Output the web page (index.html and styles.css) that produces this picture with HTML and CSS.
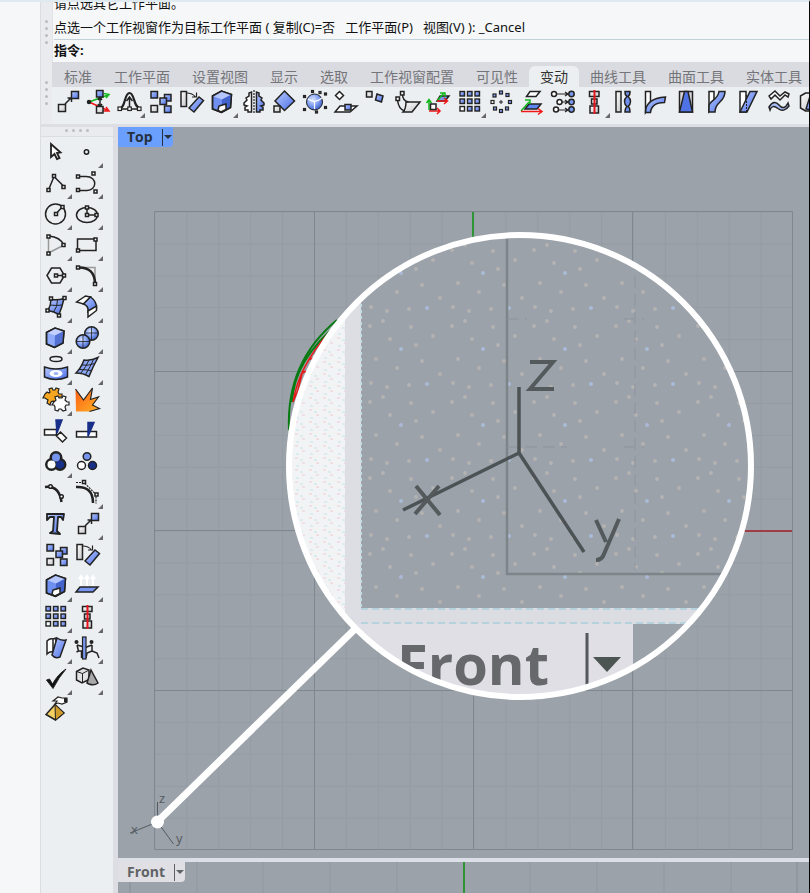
FILE: index.html
```html
<!DOCTYPE html>
<html lang="zh-CN">
<head>
<meta charset="utf-8">
<meta name="viewport" content="width=device-width, initial-scale=1">
<title>工作平面</title>
<link rel="stylesheet" href="styles.css">
</head>
<body>
<svg class="defs" width="0" height="0" aria-hidden="true">
  <defs>
    <linearGradient id="b" x1="0" y1="0" x2="1" y2="1"><stop offset="0" stop-color="#b9caff"/><stop offset="1" stop-color="#4a6fe6"/></linearGradient>
    <linearGradient id="g" x1="0" y1="0" x2="1" y2="1"><stop offset="0" stop-color="#fff"/><stop offset="1" stop-color="#c4c4c8"/></linearGradient>
    <linearGradient id="o" x1="0" y1="0" x2="1" y2="1"><stop offset="0" stop-color="#ff5a10"/><stop offset="1" stop-color="#ffb52a"/></linearGradient>
    <radialGradient id="s" cx=".4" cy=".35" r=".7"><stop offset="0" stop-color="#dce5ff"/><stop offset=".5" stop-color="#86a3f5"/><stop offset="1" stop-color="#3457bd"/></radialGradient>
    <symbol id="move" viewBox="0 0 31 31">
      <path d="M13 17l6-6M15.500 11H19.500V15"/><rect x="6.500" y="17.500" width="7" height="7" fill="url(#g)"/><rect x="19.500" y="4.500" width="7" height="7" fill="url(#b)"/>
    </symbol>
    <symbol id="copy" viewBox="0 0 31 31">
      <rect x="6" y="4.500" width="6.500" height="6.500" fill="url(#b)"/><rect x="6" y="18.500" width="6.500" height="6.500" fill="url(#g)"/><rect x="19.500" y="7.500" width="6.500" height="6.500" fill="url(#b)"/><rect x="15" y="11" width="6.500" height="6.500" fill="url(#b)"/><rect x="19.500" y="19" width="6.500" height="6.500" fill="url(#b)"/>
    </symbol>
    <symbol id="rotate" viewBox="0 0 31 31">
      <rect x="5" y="4.500" width="5.500" height="15" fill="url(#g)"/><path d="M10.500 6q6 0 9 4M16 10h4.500V5.500" stroke-width="1.200"/><path d="M13 21L23 10l4.500 3.500L18 25z" fill="url(#b)"/>
    </symbol>
    <symbol id="cage" viewBox="0 0 31 31">
      <path d="M5.500 9L14.500 4l10 3.500-1 13-9 5-9-3.500z" fill="#6f90f0"/><path d="M5.500 9L14.500 4l10 3.500L15 12.500z" fill="#b4c6fc" stroke="none"/><path d="M15 12.500l9.500-5-1 13-9 5z" fill="#4464cc" stroke="none"/><path d="M5.500 9L14.500 4l10 3.500-1 13-9 5-9-3.500z"/><path d="M12 19l7-2v5.500l-5 2.500-3-2z" fill="#fff"/>
    </symbol>
    <symbol id="array" viewBox="0 0 31 31">
      <g fill="url(#b)" stroke-width="1.400"><rect x="5" y="4.500" width="4.500" height="4.500"/><rect x="12.500" y="4.500" width="4.500" height="4.500"/><rect x="20" y="4.500" width="4.500" height="4.500"/><rect x="5" y="12" width="4.500" height="4.500"/><rect x="12.500" y="12" width="4.500" height="4.500"/><rect x="20" y="12" width="4.500" height="4.500"/><rect x="5" y="19.500" width="4.500" height="4.500" fill="#fff"/><rect x="12.500" y="19.500" width="4.500" height="4.500"/><rect x="20" y="19.500" width="4.500" height="4.500"/></g>
    </symbol>
    <symbol id="align" viewBox="0 0 31 31">
      <g fill="url(#g)"><rect x="10.500" y="4.500" width="9.500" height="5"/><rect x="12.500" y="12" width="5.500" height="5"/><rect x="11" y="19" width="8.500" height="7"/></g><path d="M15.500 3v24" stroke="#e8141c" stroke-width="2"/>
    </symbol>
  </defs>
</svg>

<div class="app">
  <section class="command">
    <div class="grip"><i></i><i></i><i></i><i></i></div>
    <div class="console">
      <div class="history">
        <p>请点选其它工作平面。</p>
        <p>点选一个工作视窗作为目标工作平面 ( 复制(C)=否&nbsp;&nbsp; 工作平面(P)&nbsp;&nbsp; 视图(V) ): _Cancel</p>
      </div>
      <div class="prompt"><label for="cmd">指令:</label><input id="cmd" type="text"></div>
    </div>
  </section>

  <section class="ribbon">
    <div class="grip"><i></i><i></i><i></i><i></i></div>
    <div class="ribbon-body">
      <nav class="tabs">
        <button>标准</button><button>工作平面</button><button>设置视图</button><button>显示</button><button>选取</button><button>工作视窗配置</button><button>可见性</button><button class="active">变动</button><button>曲线工具</button><button>曲面工具</button><button>实体工具</button>
      </nav>
      <div class="tools">
        <button class="tool" aria-label="移动"><svg><use href="#move"/></svg></button>
        <button class="tool" aria-label="对齐轴"><svg viewBox="0 0 31 31"><path d="M6 15L25 8M21 6.500l5 1-3 3.500" stroke="#12b81c"/><path d="M6 15l19 8.500M20 24l6 0-3-4" stroke="#f01818"/><circle cx="6" cy="15" r="1.500" fill="#222"/><path d="M17 10v10M15 13l2-3 2 3M15 17l2 3 2-3"/><rect x="13.500" y="3.500" width="6.500" height="6.500" fill="url(#b)"/><rect x="13.500" y="19.500" width="6.500" height="6.500" fill="url(#g)"/></svg></button>
        <button class="tool more" aria-label="软移动"><svg viewBox="0 0 31 31"><path d="M5 22C12 21 10 6 15.500 6S19 21 27 22" stroke-width="2.200"/><path d="M15.500 21V10M12.500 14l3-4 3 4M7 22h17"/><rect x="4" y="20" width="3.500" height="3.500" fill="#fff" stroke-width="1.200"/><rect x="13.800" y="20" width="3.500" height="3.500" fill="#fff" stroke-width="1.200"/><rect x="23.500" y="20" width="3.500" height="3.500" fill="#fff" stroke-width="1.200"/></svg></button>
        <button class="tool" aria-label="复制"><svg><use href="#copy"/></svg></button>
        <button class="tool" aria-label="旋转"><svg><use href="#rotate"/></svg></button>
        <button class="tool more" aria-label="变形"><svg><use href="#cage"/></svg></button>
        <button class="tool" aria-label="镜像"><svg viewBox="0 0 31 31"><path d="M13.500 5v20H10v-2H7v-3l2-1-3-1 0-2 3-3-1-2 3-2V6z" fill="#fff"/><path d="M18.500 5v20H22v-2h3v-3l-2-1 3-1 0-2-3-3 1-2-3-2V6z" fill="url(#b)"/><path d="M16 3v24" stroke-dasharray="2 1" stroke-width="1.200"/></svg></button>
        <button class="tool" aria-label="缩放"><svg viewBox="0 0 31 31"><path d="M15.500 4l10 10-10 9.500-9.500-9.500z" fill="url(#b)"/><rect x="5" y="19" width="6" height="6" fill="url(#g)"/></svg></button>
        <button class="tool" aria-label="球形对变"><svg viewBox="0 0 31 31"><circle cx="14.500" cy="15" r="8" fill="url(#s)" stroke-width="1"/><path d="M8 12q7 5 14-1M14.500 14v8" stroke="#fff" stroke-width="1.200"/><g fill="#888" stroke-width="1.200"><rect x="11.500" y="3.500" width="2" height="2"/><rect x="19" y="4.500" width="2" height="2"/><rect x="3.500" y="8.500" width="2" height="2"/><rect x="24.500" y="6" width="2" height="2"/><rect x="3.500" y="21.500" width="2" height="2"/><rect x="15.500" y="24" width="2" height="2"/><rect x="24.500" y="19.500" width="2" height="2"/></g></svg></button>
        <button class="tool" aria-label="投影至平面"><svg viewBox="0 0 31 31"><path d="M8.500 4.500l4 4-4 4-4-4z" fill="#fff"/><path d="M9 19h17l-7 6H4z" fill="#fff"/><rect x="14" y="17.500" width="6" height="5.500" fill="url(#b)"/></svg></button>
        <button class="tool" aria-label="两点定位"><svg viewBox="0 0 31 31"><rect x="4.500" y="4.500" width="5.500" height="5.500" fill="url(#g)"/><path d="M15 7l6 2-1.500 6-6-2z" fill="url(#b)"/></svg></button>
        <button class="tool" aria-label="定位至曲面"><svg viewBox="0 0 31 31"><path d="M13 15h14l-8 10h-9q3-3 3-10z" fill="url(#g)"/><path d="M4.500 13q1 9 7 11M9.500 7q0 7 6 8"/><rect x="3" y="10" width="3.500" height="3.500" fill="#fff"/><rect x="7.500" y="4.500" width="3.500" height="3.500" fill="#fff"/></svg></button>
        <button class="tool" aria-label="重新对应"><svg viewBox="0 0 31 31"><path d="M13 9h9l-4 5h-8z" fill="#7897ef" transform="translate(3 0)"/><path d="M5 23V13M2.500 16L5 12.500 7.500 16M13 14l7-8M16 6h5v4" stroke="#12b81c"/><path d="M5 24h10M13 21l3 3-3 3M13 14h10M20 11l3.500 3-3.500 3" stroke="#f01818"/><rect x="6.500" y="17" width="5.500" height="5.500" fill="#fff"/></svg></button>
        <button class="tool more" aria-label="矩形阵列"><svg><use href="#array"/></svg></button>
        <button class="tool" aria-label="环形阵列"><svg viewBox="0 0 31 31"><g fill="url(#b)" stroke-width="1.200"><rect x="13.500" y="4" width="3" height="3"/><rect x="20" y="6.500" width="3" height="3"/><rect x="22.500" y="13.500" width="3" height="3"/><rect x="19.500" y="20" width="3" height="3"/><rect x="13.500" y="22.500" width="3" height="3"/><rect x="7.500" y="20" width="3" height="3"/><rect x="5" y="13.500" width="3" height="3" fill="#fff"/><rect x="7" y="7" width="3" height="3"/></g><path d="M13 15h4M15 13v4" stroke-width="1"/></svg></button>
        <button class="tool" aria-label="工作平面定位"><svg viewBox="0 0 31 31"><path d="M13 4.500h10l-4 5H9.500z" fill="#fff"/><path d="M12 17h12l-4 5H8z" fill="#5f83ec"/><path d="M4 24l8-9M8 13h5v4" stroke="#12b81c"/><path d="M4 24.500h20M21 21.500l4 3-4 3" stroke="#f01818"/></svg></button>
        <button class="tool" aria-label="设置点"><svg viewBox="0 0 31 31"><path d="M7 7h17M12 15h12M9 23h15M17 5l3 2-3 2M17 13l3 2-3 2M17 21l3 2-3 2" stroke-width="1.200"/><g fill="#fff"><circle cx="6" cy="7" r="2.500"/><circle cx="11.500" cy="15" r="2.500"/><circle cx="8" cy="22.500" r="2.500"/></g><g fill="#7897ef"><circle cx="23.500" cy="7" r="2.700"/><circle cx="23.500" cy="15" r="2.700"/><circle cx="23.500" cy="22.500" r="2.700"/></g></svg></button>
        <button class="tool more" aria-label="对齐"><svg><use href="#align"/></svg></button>
        <button class="tool" aria-label="扭转"><svg viewBox="0 0 31 31"><rect x="6" y="4.500" width="5" height="20.500" fill="url(#g)"/><path d="M15 4.500h5q0 4-2 5 2.500 2 2.500 5t-2.500 5q2 1 2 5.500h-5q0-4 2-5.500-2.500-2-2.500-5t2.500-5q-2-1-2-5z" fill="#6f8ff0"/></svg></button>
        <button class="tool" aria-label="弯曲"><svg viewBox="0 0 31 31"><path d="M4.500 4.500h5V18L4.500 25.500z" fill="#fff"/><path d="M4.500 25.500q0-14 20-15.500l-1 5.500q-13 0-14 10z" fill="url(#b)"/></svg></button>
        <button class="tool" aria-label="锥状化"><svg viewBox="0 0 31 31"><path d="M7.500 4.500h13v20.500h-13z" fill="#d6d6da"/><path d="M12.500 4.500h3.500l4.500 20.500H7.500z" fill="#4f73e6"/></svg></button>
        <button class="tool" aria-label="流动"><svg viewBox="0 0 31 31"><path d="M6 4.500h5v12l-5 8z" fill="#fff"/><path d="M6 25v-6c0-5 9-6 10-14.500h6C22 16 12 14 12 25z" fill="url(#b)"/></svg></button>
        <button class="tool" aria-label="倾斜"><svg viewBox="0 0 31 31"><path d="M6 4.500h6v20.500H6z" fill="#fff"/><path d="M6 25L16 4.500h7L13 25z" fill="url(#b)"/><path d="M12.500 8v17" stroke-dasharray="2 1" stroke-width="1"/></svg></button>
        <button class="tool" aria-label="平滑"><svg viewBox="0 0 31 31"><path d="M4 9l6-5 5 5 5-4 4 2-1 3-3-2-5 5-5-5-4 4z" fill="#fff"/><path d="M4 20q5-8 10-2t9-2l1 3q-5 7-11 2.500t-8 1.500z" fill="#a9bdf8"/></svg></button>
        <button class="tool" aria-label="沿曲面流动"><svg viewBox="0 0 31 31"><path d="M4.500 9l5-3h8v18h-8l-5-3z" fill="url(#g)"/><path d="M10 22l5-16h6v18z" fill="url(#b)"/></svg></button>
      </div>
    </div>
  </section>

  <main class="workspace">
    <aside class="palette">
      <div class="grip wide"><i></i><i></i><i></i><i></i></div>
      <div class="palette-grid">
        <button class="tool" aria-label="选取"><svg viewBox="0 0 31 31"><path d="M10 7v13l3.500-3 2.500 5 2.500-1-2.500-5 3.500-.500z" fill="#fff" stroke-width="1.800"/></svg></button>
        <button class="tool more" aria-label="点"><svg viewBox="0 0 31 31"><circle cx="14.500" cy="15" r="2.200"/></svg></button>
        <button class="tool more" aria-label="多重直线"><svg viewBox="0 0 31 31"><path d="M7.500 22L13 8.500l10 10"/><g fill="#fff"><rect x="6" y="20.500" width="3" height="3"/><rect x="11.500" y="6.500" width="3" height="3"/><rect x="21" y="17.500" width="3" height="3"/></g></svg></button>
        <button class="tool more" aria-label="曲线"><svg viewBox="0 0 31 31"><path d="M6 8.500h8c12 0 11 14 1 14H6"/><g fill="#fff"><rect x="4.500" y="7" width="3" height="3"/><rect x="4.500" y="20.500" width="3" height="3"/><rect x="20" y="4" width="3" height="3"/><rect x="22" y="22" width="3" height="3"/></g></svg></button>
        <button class="tool more" aria-label="圆"><svg viewBox="0 0 31 31"><circle cx="14.500" cy="15" r="10"/><path d="M15 15l6-7"/><g fill="#fff"><rect x="13.500" y="13.500" width="3" height="3"/><rect x="20" y="6.500" width="3" height="3"/></g></svg></button>
        <button class="tool more" aria-label="椭圆"><svg viewBox="0 0 31 31"><ellipse cx="15" cy="16" rx="10.500" ry="7.500"/><path d="M15 9v7h9"/><g fill="#fff"><rect x="13.500" y="7" width="3" height="3"/><rect x="13.500" y="14.500" width="3" height="3"/><rect x="23" y="14.500" width="3" height="3"/></g></svg></button>
        <button class="tool more" aria-label="圆弧"><svg viewBox="0 0 31 31"><path d="M7.500 23V7" stroke="#999"/><path d="M7.500 23L23 15" stroke="#999"/><path d="M8 6q11 1 15 9"/><g fill="#fff"><rect x="6" y="5" width="3" height="3"/><rect x="6" y="22" width="3" height="3"/><rect x="21" y="13.500" width="3" height="3"/></g></svg></button>
        <button class="tool more" aria-label="矩形"><svg viewBox="0 0 31 31"><rect x="5.500" y="9" width="18.500" height="11.500"/><g fill="#fff"><rect x="4.500" y="19" width="3" height="3"/><rect x="22" y="8" width="3" height="3"/></g></svg></button>
        <button class="tool more" aria-label="多边形"><svg viewBox="0 0 31 31"><path d="M6 14.500L10.500 7h8.500l4.500 7.500L19 22h-8.500zM15 14.500h8"/><g fill="#fff"><rect x="13.500" y="13" width="3" height="3"/><rect x="21.500" y="13" width="3" height="3"/></g></svg></button>
        <button class="tool more" aria-label="曲线圆角"><svg viewBox="0 0 31 31"><path d="M6 6.500h17v17" stroke="#999"/><path d="M6 6.500Q23 6 23 23" stroke-width="2.500"/><g fill="#fff"><rect x="4.500" y="5" width="3" height="3"/><rect x="21.500" y="21.500" width="3" height="3"/></g></svg></button>
        <button class="tool more" aria-label="曲面"><svg viewBox="0 0 31 31"><path d="M10 7.500q7 1 13-1-2 9-5 16-5-3-11-4 3-6 3-11z" fill="url(#b)"/><path d="M16.500 8q0 7-4 12M9 13q7 1 12 0" stroke-width="1"/><g fill="#fff"><rect x="8.500" y="5" width="3" height="3"/><rect x="22" y="4.500" width="3" height="3"/><rect x="5" y="17" width="3" height="3"/><rect x="16.500" y="22" width="3" height="3"/></g></svg></button>
        <button class="tool more" aria-label="曲面圆角"><svg viewBox="0 0 31 31"><path d="M4.500 10l9-6 5 1-7 7z" fill="#fff"/><path d="M11.500 12l7-7q6 4 6 11L16 20q1-6-4.500-8z" fill="url(#b)"/><path d="M16 19l8.500-5v4.500L16 25z" fill="#fff"/></svg></button>
        <button class="tool more" aria-label="立方体"><svg viewBox="0 0 31 31"><path d="M5.500 9.500L14 5l9 3-1 12-8.500 4.500-8-3.500z" fill="#8fabfa"/><path d="M5.500 9.500L14 5l9 3-9 4.500z" fill="#c3d0ff" stroke="none"/><path d="M14 12.500l9-4.500-1 12-8.500 4.500z" fill="#5371d2" stroke="none"/><path d="M5.500 9.500L14 5l9 3-1 12-8.500 4.500-8-3.500z"/></svg></button>
        <button class="tool more" aria-label="布尔运算"><svg viewBox="0 0 31 31"><circle cx="19.500" cy="10.500" r="6.800" fill="url(#s)"/><circle cx="11" cy="18.500" r="6.800" fill="url(#s)"/><path d="M4.500 18.500h13M11 12v13M14 10h12M19.500 4v13" stroke-width=".800"/></svg></button>
        <button class="tool more" aria-label="投影曲线"><svg viewBox="0 0 31 31"><ellipse cx="15" cy="5" rx="6" ry="2.500"/><path d="M3.500 13q11 4 23 0v10q-12 5-23 0z" fill="url(#b)"/><ellipse cx="15" cy="19.500" rx="6.500" ry="3.500" fill="#fff" stroke="none"/><ellipse cx="15" cy="19.500" rx="2.500" ry="1.500" fill="#9cb2f4" stroke="none"/></svg></button>
        <button class="tool more" aria-label="网格"><svg viewBox="0 0 31 31"><path d="M12 6q7 1 14-2.500-5 9-9 19Q11 19 4 19q5-5 8-13z" fill="#8aa5f4"/><path d="M17 6q-3 7-8 13M21.500 5.500q-3 7-8 15M9.500 11q7 1 13-1.500M7 15.500q6 0 12 1" stroke-width="1"/></svg></button>
        <button class="tool more" aria-label="组合"><svg viewBox="0 0 31 31"><path d="M4 9l2-2 2 1 1-1-1-3 3-1 1 2h2l1-2 3 1-1 3 1 2 3 0v3l-3 0-2 2 1 3-3 1-2-2-2 1-1 3-3-2 1-3-3-2-2 0z" fill="#f7a621" stroke-width="1.200"/><path d="M13 17l2-2-1-3 3-1 1 2 3 0 1-2 3 1-1 3 2 2 2 0v3l-3 0-1 2 1 3-3 1-2-2-2 0-1 2-3-1 0-3-1-2-2 0z" fill="#fff" stroke-width="1.200"/></svg></button>
        <button class="tool" aria-label="炸开"><svg viewBox="0 0 31 31"><path d="M3.500 4l8 11 9-12-2 11.500 8-2.500-6 8 7 3.500-10 3H4z" fill="url(#o)" stroke="none"/><path d="M3.500 4l8 11 9-12-2 11.500 8-2.500-6 8 7 3.500-10 3" stroke-width="1.200"/></svg></button>
        <button class="tool" aria-label="修剪"><svg viewBox="0 0 31 31"><path d="M3.500 13.500h12v5.500h-12zM15.500 20l4-4 6 6-4 4z" fill="#fff"/><path d="M15 4h6l-5 13z" fill="#18308a" stroke="#18308a"/></svg></button>
        <button class="tool" aria-label="分割"><svg viewBox="0 0 31 31"><path d="M4.500 15.500h20v5.500h-20z" fill="#fff"/><path d="M16 6.500h6l-6 14z" fill="#18308a" stroke="#18308a"/></svg></button>
        <button class="tool more" aria-label="群组"><svg viewBox="0 0 31 31"><g stroke-width="5"><circle cx="15" cy="10.500" r="4"/><circle cx="10.500" cy="17.500" r="4"/><circle cx="19" cy="17.500" r="4"/></g><g stroke="none"><circle cx="10.500" cy="17.500" r="4" fill="#fff"/><circle cx="19" cy="17.500" r="4" fill="#18308a"/><circle cx="15" cy="10.500" r="4" fill="#7594f0"/></g></svg></button>
        <button class="tool" aria-label="解散群组"><svg viewBox="0 0 31 31"><circle cx="15" cy="9.500" r="3.800" fill="#7594f0"/><circle cx="9.500" cy="18.500" r="4" fill="#fff"/><circle cx="20.500" cy="18.500" r="4" fill="#18308a"/></svg></button>
        <button class="tool" aria-label="编辑点"><svg viewBox="0 0 31 31"><path d="M4 9q14-2 16.500 15" stroke-width="2.500"/><g fill="#fff"><circle cx="9.500" cy="8.500" r="1.800"/><circle cx="20.500" cy="18.500" r="1.800"/></g></svg></button>
        <button class="tool more" aria-label="控制点"><svg viewBox="0 0 31 31"><path d="M4 9q17-1 17 16" stroke-width="2.500"/><path d="M4 4.500h8l12 12v9" stroke-dasharray="2 1" stroke-width="1.200"/><rect x="10.500" y="2.500" width="3" height="3" fill="#fff"/><rect x="23" y="15" width="3" height="3" fill="#fff"/></svg></button>
        <button class="tool" aria-label="文字物件"><svg viewBox="0 0 31 31"><path d="M6 5h17l-1 6-2-3h-3l-1 14 3 3-10-1 3-2 1-14H9l-3 3z" fill="url(#b)" stroke-width="1.800" stroke-linejoin="round"/></svg></button>
        <button class="tool more" aria-label="移动"><svg><use href="#move"/></svg></button>
        <button class="tool" aria-label="复制"><svg><use href="#copy"/></svg></button>
        <button class="tool" aria-label="旋转"><svg><use href="#rotate"/></svg></button>
        <button class="tool more" aria-label="变形"><svg><use href="#cage"/></svg></button>
        <button class="tool more" aria-label="分析方向"><svg viewBox="0 0 31 31"><path d="M8 16h18l-5 5H4z" fill="#7896f0"/><path d="M9 15V6M15 15V6M21 15V6M7 8l2-3 2 3M13 8l2-3 2 3M19 8l2-3 2 3" stroke="#fff" stroke-width="2"/></svg></button>
        <button class="tool more" aria-label="矩形阵列"><svg><use href="#array"/></svg></button>
        <button class="tool more" aria-label="对齐"><svg><use href="#align"/></svg></button>
        <button class="tool more" aria-label="沿曲面流动"><svg viewBox="0 0 31 31"><path d="M6 8q3-3 6-2v13q-3-1-6 2zM12 6l3-1v5l-3 9z" fill="#fff"/><path d="M16 5q4 3 9 2l-6 17q-5 2-8-2z" fill="url(#b)"/></svg></button>
        <button class="tool more" aria-label="拉伸"><svg viewBox="0 0 31 31"><g fill="#222" stroke="none"><circle cx="4.500" cy="9" r="2"/><circle cx="19.500" cy="9" r="2"/></g><path d="M5 12l1.500 6h3v7M5 12l7 2M6.500 18l-2 1M20 12l-8 3M20 12v6l5 2 2 5M20 18l-5 2-1 5" stroke-width="1.500"/><rect x="10.500" y="4" width="3.500" height="22" fill="#7897ef" stroke-width="1.200"/></svg></button>
        <button class="tool more" aria-label="确认"><svg viewBox="0 0 31 31"><path d="M5.500 16l3-1 3 5Q17 10 25 5q-7 8-13 19.500z" fill="#111" stroke-width="1"/></svg></button>
        <button class="tool more" aria-label="着色"><svg viewBox="0 0 31 31"><path d="M4.500 7.500L11 4l6 2v9.500L10 19l-5.500-3z" fill="#e2e2e4"/><path d="M4.500 7.500l6 2 6.500-3.500M10.500 9.500V19" stroke-width="1"/><path d="M19 6l7 13q-4 3-9 1l-2-1z" fill="#a8a8aa"/></svg></button>
        <button class="tool" aria-label="属性"><svg viewBox="0 0 31 31"><path d="M14 9.500l-9 10 9.500 5.500 8.500-7z" fill="#f2cf62"/><path d="M14 9.500L14.500 25l8.500-7z" fill="#cf9c2c" stroke-width="1"/><path d="M12 6l5-4 4 1h5v4l-5 2-4-1-3 1 2-3z" fill="#fff" stroke-width="1.200"/><path d="M23 3h3v4h-3z" fill="#222" stroke="none"/></svg></button>
      </div>
    </aside>

    <div class="viewports">
      <section class="viewport top">
        <button class="view-title active"><span>Top</span><b></b></button>
      </section>
      <section class="viewport front">
        <svg class="front-grid" width="692" height="32" stroke="#7d868e" fill="none" aria-hidden="true"><path d="M12 0v32M679 0v32" stroke-opacity=".7"/><path d="M79 0v32M145 0v32M212 0v32M279 0v32M412 0v32M479 0v32M546 0v32M613 0v32" stroke-opacity=".3"/><path d="M346 0v32" stroke="#2f9438" stroke-width="2"/></svg>
        <button class="view-title"><span>Front</span><b></b></button>
      </section>

      <svg class="scene" width="692" height="766" viewBox="118 127 692 766" aria-hidden="true">
        <defs>
          <pattern id="minor" x="154.500" y="211.500" width="31.900" height="31.900" patternUnits="userSpaceOnUse"><path d="M.500 0v32M0 .500h32" stroke="#7d868e" stroke-opacity=".24" fill="none"/></pattern>
          <pattern id="specks" x="363" y="240" width="82" height="76" patternUnits="userSpaceOnUse"><g fill="#b5b3b2"><circle cx="7" cy="10" r="1.900"/><circle cx="27" cy="23" r="1.900"/><circle cx="48" cy="11" r="1.900"/><circle cx="70" cy="20" r="1.900"/><circle cx="13" cy="43" r="1.900"/><circle cx="34" cy="52" r="1.900"/><circle cx="59" cy="45" r="1.900"/><circle cx="77" cy="58" r="1.900"/><circle cx="8" cy="67" r="1.900"/><circle cx="46" cy="69" r="1.900"/><circle cx="20" cy="5" r="1.900"/><circle cx="53" cy="29" r="1.900"/><circle cx="24" cy="71" r="1.900"/></g><g fill="#a9b9d8"><circle cx="38" cy="33" r="2"/><circle cx="64" cy="68" r="2"/></g></pattern>
          <pattern id="grain" width="14" height="12" patternUnits="userSpaceOnUse"><path d="M1 2h3M8 7h3" stroke="#f1dfe3" stroke-width="2"/><path d="M6 4h3M2 10h3" stroke="#dcebee" stroke-width="2"/></pattern>
          <clipPath id="lens"><circle cx="520" cy="466" r="231"/></clipPath>
        </defs>
        <rect x="154" y="211" width="638" height="638" fill="url(#minor)"/>
        <path d="M154.500 211.500h638v638h-638zM314.500 211v638M473.500 211v638M632.500 211v638M154 371.500h638M154 530.500h638M154 690.500h638" fill="none" stroke="#7f888f"/>
        <path d="M473 212v30" stroke="#2f9438" stroke-width="2"/>
        <path d="M740 531h52" stroke="#a13d45" stroke-width="2"/>
        <path d="M337 320Q286 362 289 430M339 323Q294 360 292 402" fill="none" stroke="#087a12" stroke-width="2"/>
        <path d="M328 334Q299 366 293 402l5-12 4-16M301 374l5-3M308 360l5-2" fill="none" stroke="#e81919" stroke-width="1.500"/>
        <path d="M157.500 802v20L130 833M157.500 822l16 22" fill="none" stroke="#545b60"/>
        <g class="axis-small"><text x="159" y="803">z</text><text x="131" y="834">x</text><text x="176" y="843">y</text></g>
        <path d="M157 822L355 629" stroke="#fff" stroke-width="7"/>
        <circle cx="157.500" cy="822" r="6.500" fill="#fff"/>

        <g clip-path="url(#lens)">
          <rect x="286" y="232" width="470" height="470" fill="#9ba2aa"/>
          <rect x="361" y="232" width="395" height="376" fill="url(#specks)"/>
          <rect x="286" y="232" width="60" height="470" fill="#f1f3f5"/>
          <rect x="286" y="232" width="60" height="470" fill="url(#grain)"/>
          <rect x="345" y="232" width="16" height="470" fill="#dddee4"/>
          <path d="M361 232v376" stroke="#c6dce5" stroke-width="2" stroke-dasharray="3 3"/>
          <rect x="361" y="608" width="395" height="16" fill="#dcdde3"/>
          <path d="M361 609h395M361 623h395" stroke="#b5d2dd" stroke-width="2" stroke-dasharray="7 4"/>
          <rect x="345" y="624" width="288" height="80" fill="#dfdfe5"/>
          <path d="M507 232v342h249" fill="none" stroke="#7e8588" stroke-width="2.500"/>
          <path d="M635 240v330M507 319h20M624 319h20M624 447h20M507 447h60" fill="none" stroke="#8b9298" stroke-opacity=".45" stroke-dasharray="12 6" stroke-width="2"/>
          <path d="M519 387v66L403 510M519 453l65 99" fill="none" stroke="#4d5255" stroke-width="3.500"/>
          <path d="M530 362h23l-23 27h24M416 486l24 29M439 486l-24 28M596 520l10 22M619 519l-15 35q-2 6-8 6" fill="none" stroke="#54595c" stroke-width="4"/>
          <text class="lens-title" x="397" y="685">Front</text>
          <path d="M587 633v60" stroke="#55595c" stroke-width="3"/>
          <path d="M593 657h28l-14 15z" fill="#4d5553"/>
        </g>
        <circle cx="520" cy="466" r="231" fill="none" stroke="#fff" stroke-width="6"/>
      </svg>
    </div>
  </main>
</div>
</body>
</html>
```
FILE: styles.css
```css
* { box-sizing: border-box; }

body {
  margin: 0;
  background: #f5f7f8;
  color: #111;
  font-family: "Noto Sans", "Noto Sans CJK SC", sans-serif;
}

button {
  border: 0;
  padding: 0;
  background: none;
  color: inherit;
  font: inherit;
}

p { margin: 0; }

.defs { position: absolute; }

.app {
  display: flex;
  flex-direction: column;
  height: 100vh;
  overflow: hidden;
  padding-left: 40px;
  border-top: 2px solid #dfeaf0;
  border-right: 1px solid #050505;
}

.grip {
  flex: none;
  display: flex;
  flex-direction: column;
  align-items: center;
  justify-content: center;
  gap: 4px;
  width: 12px;
  background: #e9ebee;
  border-left: 1px solid #dcdde2;
}

.grip i {
  width: 3px;
  height: 3px;
  border-radius: 50%;
  background: #bbbcc2;
}

.grip.wide {
  flex-direction: row;
  width: auto;
  height: 10px;
  padding-bottom: 3px;
  border-left: 0;
  border-bottom: 1px solid #dcdde2;
}

.command {
  display: flex;
  flex: none;
  height: 60px;
  font-size: 13px;
  line-height: 24px;
}

.console {
  flex: 1;
  min-width: 0;
  padding-left: 1px;
  border-left: 1px solid #e1e3e7;
}

.history {
  display: flex;
  flex-direction: column;
  justify-content: flex-end;
  height: 38px;
  overflow: hidden;
  white-space: nowrap;
  border-bottom: 1px solid #c3d1da;
}

.prompt {
  display: flex;
  height: 22px;
  line-height: 20px;
  font-weight: bold;
}

.prompt input {
  flex: 1;
  min-width: 0;
  border: 0;
  outline: 0;
  background: transparent;
  font: inherit;
}

.ribbon {
  display: flex;
  flex: none;
  height: 65px;
  border-bottom: 3px solid #dddee3;
}

.ribbon-body {
  flex: 1;
  min-width: 0;
  overflow: hidden;
  background: #eceff1;
}

.tabs {
  display: flex;
  height: 25px;
  padding: 4px 0 0 1px;
  background: #dadbe0;
  color: #74757a;
  font-size: 14px;
  line-height: 21px;
}

.tabs button {
  flex: none;
  padding: 0 11px;
  white-space: nowrap;
}

.tabs .active {
  background: #eceff1;
  border-radius: 6px 6px 0 0;
  color: #333;
}

.tools { display: flex; }

.tool {
  flex: none;
  position: relative;
  width: 31px;
  height: 31px;
}

.tool svg {
  display: block;
  width: 31px;
  height: 31px;
  fill: none;
  stroke: #222;
  stroke-width: 1.5px;
}

.tool.more::after {
  content: "";
  position: absolute;
  right: 0;
  bottom: 0;
  border-left: 5px solid transparent;
  border-bottom: 5px solid #66676b;
}

.workspace {
  display: flex;
  flex: 1;
  min-height: 0;
}

.palette {
  flex: none;
  width: 78px;
  background: #eceff1;
  border-left: 1px solid #dcdde2;
  border-right: 5px solid #dddee4;
}

.palette-grid {
  display: grid;
  grid-template-columns: 31px 31px;
}

.viewports {
  position: relative;
  flex: 1;
  min-width: 0;
  display: flex;
  flex-direction: column;
  overflow: hidden;
}

.viewport {
  position: relative;
  background: #9ba2aa;
}

.viewport.top { flex: 1; }

.viewport.front {
  height: 35px;
  border-top: 4px solid #dcdfe6;
}

.front-grid {
  position: absolute;
  top: 0;
  left: 0;
}

.scene {
  position: absolute;
  top: 0;
  left: 0;
  pointer-events: none;
}

.view-title {
  position: relative;
  display: flex;
  align-items: center;
  height: 20px;
  background: #dfdfe4;
  border-radius: 0 0 4px 0;
  color: #606366;
  font: bold 14px/20px "Open Sans", sans-serif;
}

.view-title.active {
  background: #6b9ffd;
  color: #26313d;
}

.view-title span { padding: 0 9px; }

.view-title b {
  display: flex;
  align-items: center;
  height: 17px;
  padding: 0 1px;
  border-left: 1px solid currentColor;
}

.view-title b::before {
  content: "";
  border: 4px solid transparent;
  border-top-color: currentColor;
  border-bottom: 0;
}

.axis-small {
  fill: #545b60;
  font: 13px "Open Sans", sans-serif;
}

.lens-title {
  fill: #66686b;
  font: bold 56px "Open Sans", sans-serif;
}
```
